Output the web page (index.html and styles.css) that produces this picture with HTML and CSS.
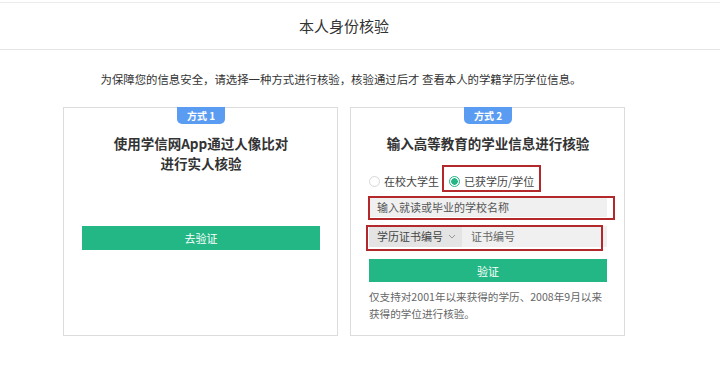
FILE: index.html
```html
<!DOCTYPE html>
<html lang="zh-CN">
<head>
    <meta charset="UTF-8">
    <meta name="viewport" content="width=device-width, initial-scale=1.0">
    <title>本人身份核验</title>
    <link rel="stylesheet" href="styles.css">
</head>
<body>
    <div class="header">本人身份核验</div>

    <p class="tip">为保障您的信息安全，请选择一种方式进行核验，核验通过后才 查看本人的学籍学历学位信息。</p>

    <div class="cards">
        <div class="card">
            <span class="badge">方式 1</span>
            <h2 class="title">使用学信网App通过人像比对<br>进行实人核验</h2>
            <button class="btn btn-app">去验证</button>
        </div>

        <div class="card card-form">
            <span class="badge">方式 2</span>
            <h2 class="title">输入高等教育的学业信息进行核验</h2>
            <div class="radios">
                <label class="radio"><i class="dot"></i>在校大学生</label>
                <label class="radio on"><i class="dot"></i>已获学历/学位</label>
            </div>
            <div class="field">输入就读或毕业的学校名称</div>
            <div class="field field-split">
                <span class="select">学历证书编号 <svg width="8" height="5" viewBox="0 0 8 5"><path d="M1 1l3 3 3-3" fill="none" stroke="#999" stroke-width="1"/></svg></span>
                <span class="num">证书编号</span>
            </div>
            <button class="btn">验证</button>
            <p class="note">仅支持对2001年以来获得的学历、2008年9月以来<br>获得的学位进行核验。</p>

            <!-- 标注框 -->
            <div class="mark mark-1"></div>
            <div class="mark mark-2"></div>
            <div class="mark mark-3"></div>
        </div>
    </div>
</body>
</html>
```

FILE: styles.css
```css
body {
    margin: 0;
    padding-top: 2px;
    background: #fff;
    color: #333;
    font-family: "Noto Sans CJK SC", "Noto Sans", sans-serif;
}
.header {
    height: 46px;
    line-height: 46px;
    border-top: 1px solid #ececec;
    border-bottom: 1px solid #e6e6e6;
    padding-right: 32px;
    text-align: center;
    font-size: 15px;
    color: #333;
}
.tip {
    margin: 20px 0 0;
    padding-right: 38px;
    text-align: center;
    font-size: 11.4px;
    line-height: 18px;
    color: #333;
}
.cards {
    display: flex;
    gap: 12px;
    margin: 19px 0 0 63px;
}
.card {
    position: relative;
    width: 238px;
    height: 227px;
    border: 1px solid #dcdcdc;
    display: flex;
    flex-direction: column;
    align-items: center;
    padding: 0 17px 0 18px;
}
.badge {
    margin-top: -1px;
    width: 48px;
    height: 17px;
    line-height: 17px;
    background: #5a9cf2;
    color: #fff;
    font-size: 10px;
    font-weight: bold;
    text-align: center;
    border-radius: 0 0 5px 5px;
}
.title {
    margin: 9px 0 0;
    font-size: 13.5px;
    line-height: 20px;
    font-weight: bold;
    color: #333;
    text-align: center;
}
.btn {
    width: 100%;
    height: 24px;
    border: none;
    background: #22b784;
    color: #fff;
    font-family: inherit;
    font-size: 11px;
    padding: 0;
}
.btn-app {
    margin-top: 53px;
}
.radios {
    align-self: flex-start;
    display: flex;
    gap: 10px;
    margin-top: 20px;
    font-size: 11px;
    line-height: 16px;
    color: #444;
}
.radio {
    display: flex;
    align-items: center;
    gap: 4px;
}
.dot {
    width: 11px;
    height: 11px;
    border: 1px solid #d8d8d8;
    border-radius: 50%;
    box-sizing: border-box;
}
.radio.on .dot {
    border-color: #22b784;
    background: radial-gradient(circle, #22b784 0 3px, #fff 3.5px);
}
.field {
    align-self: stretch;
    margin-top: 8px;
    height: 20px;
    line-height: 20px;
    background: #f0f0f0;
    font-size: 11px;
    color: #555;
    padding-left: 8px;
}
.field-split {
    display: flex;
    padding-left: 0;
    margin-top: 9px;
    height: 21px;
    line-height: 21px;
}
.select {
    display: flex;
    align-items: center;
    gap: 5px;
    padding: 0 6px 0 8px;
    background: #e4e4e4;
    color: #444;
}
.num {
    padding-left: 9px;
    color: #666;
}
.card-form .btn {
    margin-top: 12px;
    height: 23px;
}
.note {
    align-self: stretch;
    margin: 6px 0 0;
    font-size: 10.6px;
    line-height: 17px;
    white-space: nowrap;
    color: #666;
}
.mark {
    position: absolute;
    border: 2px solid #b3282b;
    box-sizing: border-box;
}
.mark-1 {
    left: 91px;
    top: 57px;
    width: 99px;
    height: 27px;
}
.mark-2 {
    left: 17px;
    top: 88px;
    width: 247px;
    height: 24px;
}
.mark-3 {
    left: 15px;
    top: 117px;
    width: 237px;
    height: 26px;
}
```
